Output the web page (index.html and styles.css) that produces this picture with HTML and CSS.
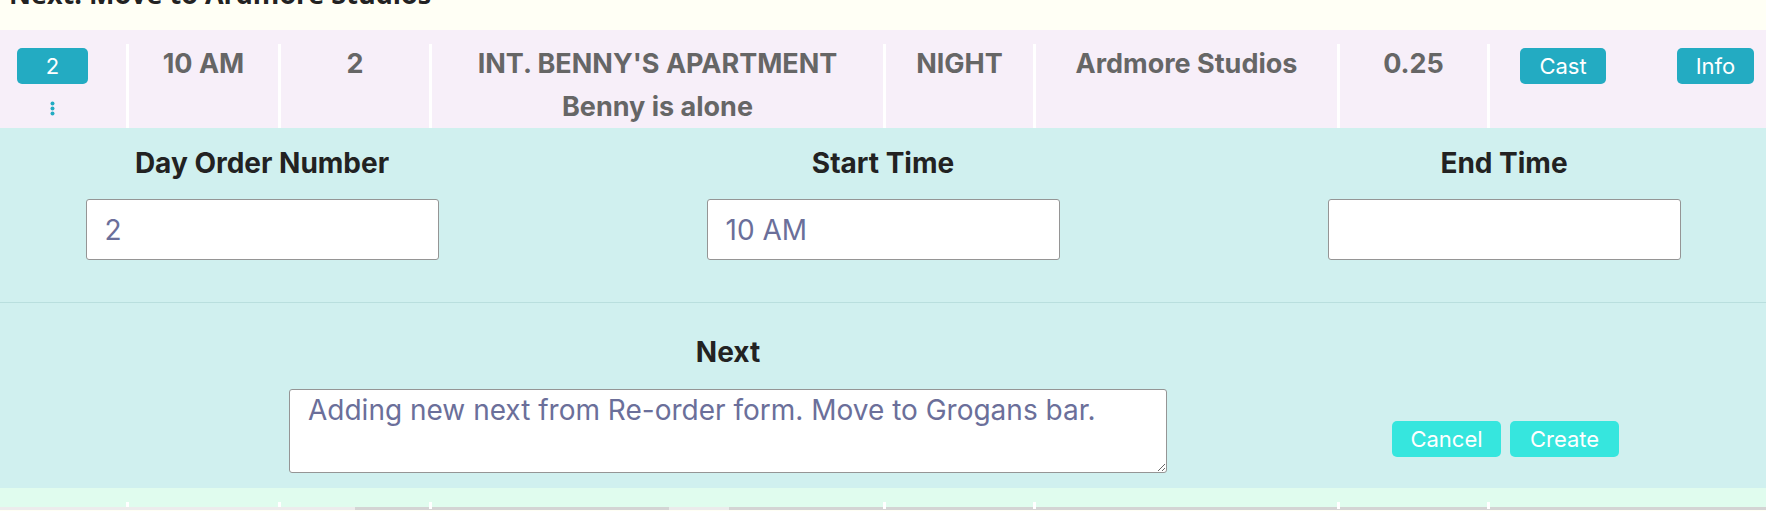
FILE: index.html
```html
<!DOCTYPE html>
<html>
<head>
<meta charset="utf-8">
<link rel="stylesheet" href="styles.css">
</head>
<body>
<div class="top">
  <h2 class="next-title">Next: Move to Ardmore Studios</h2>
</div>
<div class="scene-row">
  <div class="cell cell-first">
    <span class="badge">2</span>
    <svg class="dots" width="5" height="15" viewBox="0 0 5 15"><circle cx="2.5" cy="2.5" r="2" fill="#23abc2"/><circle cx="2.5" cy="7.5" r="2" fill="#23abc2"/><circle cx="2.5" cy="12.5" r="2" fill="#23abc2"/></svg>
  </div>
  <div class="cell">10 AM</div>
  <div class="cell">2</div>
  <div class="cell"><div>INT. BENNY'S APARTMENT</div><div class="sub">Benny is alone</div></div>
  <div class="cell">NIGHT</div>
  <div class="cell">Ardmore Studios</div>
  <div class="cell">0.25</div>
  <div class="cell cell-actions">
    <span class="badge btn-cast">Cast</span>
    <span class="badge btn-info">Info</span>
  </div>
</div>
<div class="form">
  <div class="form-grid">
    <div class="field">
      <label class="field-label">Day Order Number</label>
      <input class="field-input" type="text" value="2">
    </div>
    <div class="field">
      <label class="field-label">Start Time</label>
      <input class="field-input" type="text" value="10 AM">
    </div>
    <div class="field">
      <label class="field-label">End Time</label>
      <input class="field-input" type="text" value="">
    </div>
  </div>
  <div class="divider"></div>
  <div class="next-row">
    <div class="next-field">
      <label class="field-label">Next</label>
      <textarea class="next-text">Adding new next from Re-order form. Move to Grogans bar.</textarea>
    </div>
    <div class="actions">
      <button class="action-btn">Cancel</button>
      <button class="action-btn">Create</button>
    </div>
  </div>
</div>
<div class="scene-row scene-row-next">
  <div class="cell cell-first"></div>
  <div class="cell"></div>
  <div class="cell"></div>
  <div class="cell"></div>
  <div class="cell"></div>
  <div class="cell"></div>
  <div class="cell"></div>
  <div class="cell"></div>
</div>
<div class="hscroll"><div class="hscroll-a"></div><div class="hscroll-b"></div><div class="hscroll-c"></div></div>
</body>
</html>
```
FILE: styles.css
```css
html, body {
  margin: 0;
  padding: 0;
  overflow: hidden;
}
body {
  font-family: Inter, "Noto Sans", sans-serif;
  background: #fffff5;
}
.top {
  height: 30px;
  overflow: hidden;
  background: #fffff5;
}
.next-title {
  margin: -20px 0 0 9px;
  font-family: "Open Sans", sans-serif;
  font-size: 27px;
  line-height: 28px;
  font-weight: 700;
  color: #222;
}
.scene-row {
  display: grid;
  grid-template-columns: 126px 152px 151px 454px 150px 304px 150px 1fr;
  height: 98px;
  box-sizing: border-box;
  padding-top: 14px;
  background: #f7eff9;
}
.cell {
  border-left: 3px solid #fff;
  text-align: center;
  color: #666;
  font-weight: 700;
  font-size: 27px;
  line-height: 26px;
  padding-top: 7px;
}
.cell-first {
  border-left: none;
  padding: 4px 0 0 17px;
  display: flex;
  flex-direction: column;
  align-items: center;
  width: 71px;
}
.sub {
  margin-top: 17px;
}
.badge {
  display: inline-flex;
  align-items: center;
  justify-content: center;
  height: 36px;
  border-radius: 5px;
  background: #23abc2;
  color: #fff;
  font-weight: 400;
  font-size: 22px;
  line-height: 26px;
  box-sizing: border-box;
}
.cell-first .badge {
  width: 71px;
}
.dots {
  margin-top: 17px;
}
.cell-actions {
  display: flex;
  align-items: flex-start;
  padding: 4px 12px 0 30px;
}
.btn-cast {
  width: 86px;
}
.btn-info {
  width: 77px;
  margin-left: auto;
}
.form {
  background: #d0f0ef;
  padding-top: 21px;
  padding-bottom: 15px;
}
.form-grid {
  display: grid;
  grid-template-columns: 524px 718px 1fr;
}
.field {
  display: flex;
  flex-direction: column;
  align-items: center;
}
.field-label {
  font-size: 28px;
  line-height: 28px;
  font-weight: 700;
  color: #222;
}
.field-input {
  margin-top: 22px;
  width: 353px;
  height: 61px;
  box-sizing: border-box;
  border: 1px solid #959595;
  border-radius: 3px;
  background: #fff;
  padding: 0 18px;
  font-family: inherit;
  font-size: 28px;
  color: #6b6f9a;
  outline: none;
}
.divider {
  height: 1px;
  background: #b9dfde;
  margin-top: 42px;
}
.next-row {
  display: flex;
  align-items: flex-end;
  padding-left: 289px;
  margin-top: 35px;
}
.next-field {
  display: flex;
  flex-direction: column;
  align-items: center;
  width: 878px;
}
.next-text {
  margin-top: 23px;
  width: 878px;
  height: 84px;
  box-sizing: border-box;
  border: 1px solid #959595;
  border-radius: 3px;
  background: #fff;
  padding: 6px 18px;
  font-family: inherit;
  font-size: 28px;
  line-height: 28px;
  color: #6b6f9a;
  resize: vertical;
  outline: none;
}
.actions {
  display: flex;
  gap: 9px;
  margin-left: 225px;
  margin-bottom: 16px;
}
.action-btn {
  height: 36px;
  width: 109px;
  border: none;
  border-radius: 5px;
  background: #36e6de;
  color: #fff;
  font-family: inherit;
  font-size: 22px;
  padding: 0;
}
.scene-row-next {
  background: #e0fcee;
  height: 19px;
}
.hscroll {
  display: flex;
  height: 3px;
  background: #d4d4d4;
}
.hscroll-a {
  width: 355px;
  background: #ececec;
}
.hscroll-b {
  width: 314px;
}
.hscroll-c {
  width: 60px;
  background: #ebebeb;
}
```
